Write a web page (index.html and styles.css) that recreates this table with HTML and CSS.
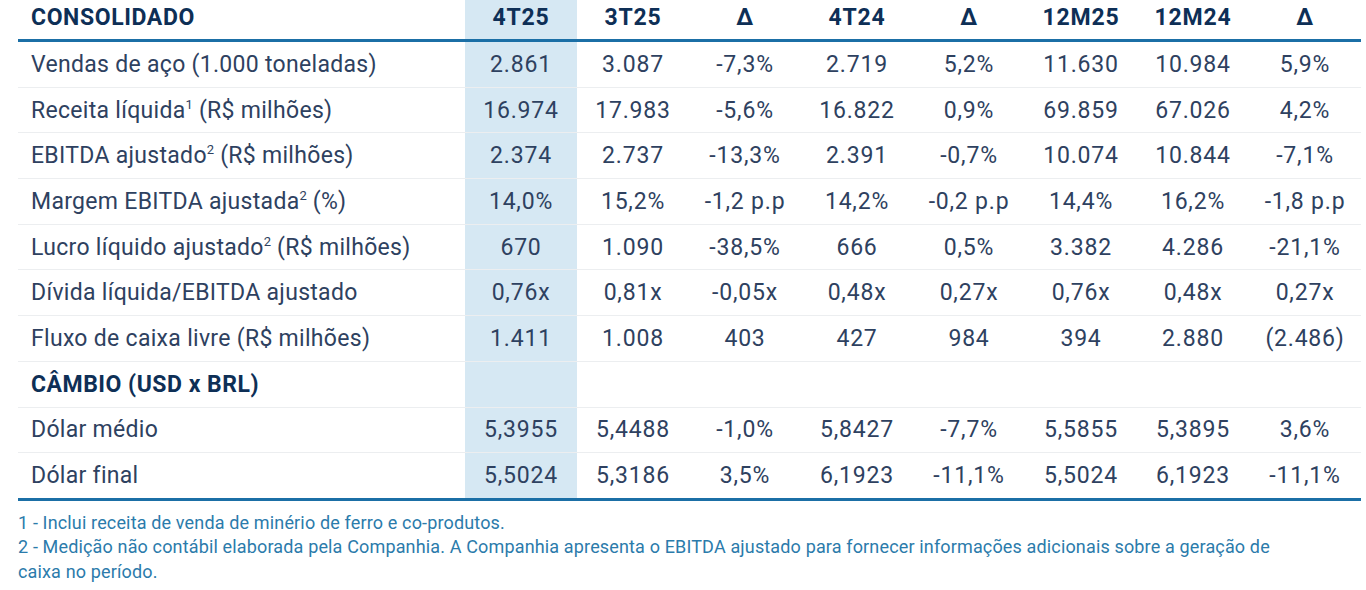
FILE: index.html
```html
<!DOCTYPE html>
<html lang="pt-BR">
<head>
<meta charset="utf-8">
<link rel="stylesheet" href="styles.css">
</head>
<body>
<div class="page">
  <table class="fin">
    <colgroup>
      <col class="c-label">
      <col class="c-val c-hl"><col class="c-val"><col class="c-val"><col class="c-val"><col class="c-val"><col class="c-val"><col class="c-val"><col class="c-val">
    </colgroup>
    <thead>
      <tr>
        <th class="lbl">CONSOLIDADO</th>
        <th class="hl">4T25</th><th>3T25</th><th>Δ</th><th>4T24</th><th>Δ</th><th>12M25</th><th>12M24</th><th>Δ</th>
      </tr>
    </thead>
    <tbody>
      <tr><td class="lbl">Vendas de aço (1.000 toneladas)</td><td class="hl">2.861</td><td>3.087</td><td>-7,3%</td><td>2.719</td><td>5,2%</td><td>11.630</td><td>10.984</td><td>5,9%</td></tr>
      <tr><td class="lbl">Receita líquida<sup>1</sup> (R$ milhões)</td><td class="hl">16.974</td><td>17.983</td><td>-5,6%</td><td>16.822</td><td>0,9%</td><td>69.859</td><td>67.026</td><td>4,2%</td></tr>
      <tr><td class="lbl">EBITDA ajustado<sup>2</sup> (R$ milhões)</td><td class="hl">2.374</td><td>2.737</td><td>-13,3%</td><td>2.391</td><td>-0,7%</td><td>10.074</td><td>10.844</td><td>-7,1%</td></tr>
      <tr><td class="lbl">Margem EBITDA ajustada<sup>2</sup> (%)</td><td class="hl">14,0%</td><td>15,2%</td><td>-1,2 p.p</td><td>14,2%</td><td>-0,2 p.p</td><td>14,4%</td><td>16,2%</td><td>-1,8 p.p</td></tr>
      <tr><td class="lbl">Lucro líquido ajustado<sup>2</sup> (R$ milhões)</td><td class="hl">670</td><td>1.090</td><td>-38,5%</td><td>666</td><td>0,5%</td><td>3.382</td><td>4.286</td><td>-21,1%</td></tr>
      <tr><td class="lbl">Dívida líquida/EBITDA ajustado</td><td class="hl">0,76x</td><td>0,81x</td><td>-0,05x</td><td>0,48x</td><td>0,27x</td><td>0,76x</td><td>0,48x</td><td>0,27x</td></tr>
      <tr><td class="lbl">Fluxo de caixa livre (R$ milhões)</td><td class="hl">1.411</td><td>1.008</td><td>403</td><td>427</td><td>984</td><td>394</td><td>2.880</td><td>(2.486)</td></tr>
      <tr class="section"><td class="lbl">CÂMBIO (USD x BRL)</td><td class="hl"></td><td></td><td></td><td></td><td></td><td></td><td></td><td></td></tr>
      <tr><td class="lbl">Dólar médio</td><td class="hl">5,3955</td><td>5,4488</td><td>-1,0%</td><td>5,8427</td><td>-7,7%</td><td>5,5855</td><td>5,3895</td><td>3,6%</td></tr>
      <tr class="last"><td class="lbl">Dólar final</td><td class="hl">5,5024</td><td>5,3186</td><td>3,5%</td><td>6,1923</td><td>-11,1%</td><td>5,5024</td><td>6,1923</td><td>-11,1%</td></tr>
    </tbody>
  </table>
  <div class="notes">
    <p>1 - Inclui receita de venda de minério de ferro e co-produtos.</p>
    <p>2 - Medição não contábil elaborada pela Companhia. A Companhia apresenta o EBITDA ajustado para fornecer informações adicionais sobre a geração de caixa no período.</p>
  </div>
</div>
</body>
</html>
```
FILE: styles.css
```css
html, body {
  margin: 0;
  padding: 0;
  background: #ffffff;
}

.page {
  padding: 0 5px 0 18px;
  font-family: Roboto, "Liberation Sans", sans-serif;
}

.fin {
  width: 1343px;
  border-collapse: collapse;
  table-layout: fixed;
}

.c-label { width: 447px; }
.c-val { width: 112px; }

.fin th {
  height: 35px;
  padding: 0 0 4px 0;
  font-size: 23px;
  font-weight: 700;
  letter-spacing: 0.8px;
  color: #0e2f56;
  text-align: center;
  vertical-align: middle;
  border-bottom: 3px solid #1b6fa6;
}

.fin th.lbl {
  text-align: left;
  padding-left: 13px;
  letter-spacing: 0.6px;
}

.fin td {
  height: 44.7px;
  padding: 0;
  font-size: 23px;
  font-weight: 400;
  letter-spacing: 0.8px;
  color: #2e4160;
  text-align: center;
  vertical-align: middle;
  border-bottom: 1px solid #eceef0;
  white-space: nowrap;
}

.fin td.lbl {
  text-align: left;
  padding-left: 13px;
  letter-spacing: 0.3px;
}

.fin .hl {
  background: #d6e8f3;
}

.fin tr.section td.lbl {
  font-weight: 700;
  color: #0e2f56;
  letter-spacing: 0.5px;
}

.fin tr.last td {
  border-bottom: 3px solid #1b6fa6;
}

.fin sup {
  font-size: 13px;
  line-height: 0;
  vertical-align: 9px;
  letter-spacing: 0;
}

.notes {
  margin-top: 10px;
  max-width: 1282px;
  color: #2b7bab;
  font-size: 18px;
  letter-spacing: 0.15px;
  line-height: 24.5px;
}

.notes p {
  margin: 0;
}
```
